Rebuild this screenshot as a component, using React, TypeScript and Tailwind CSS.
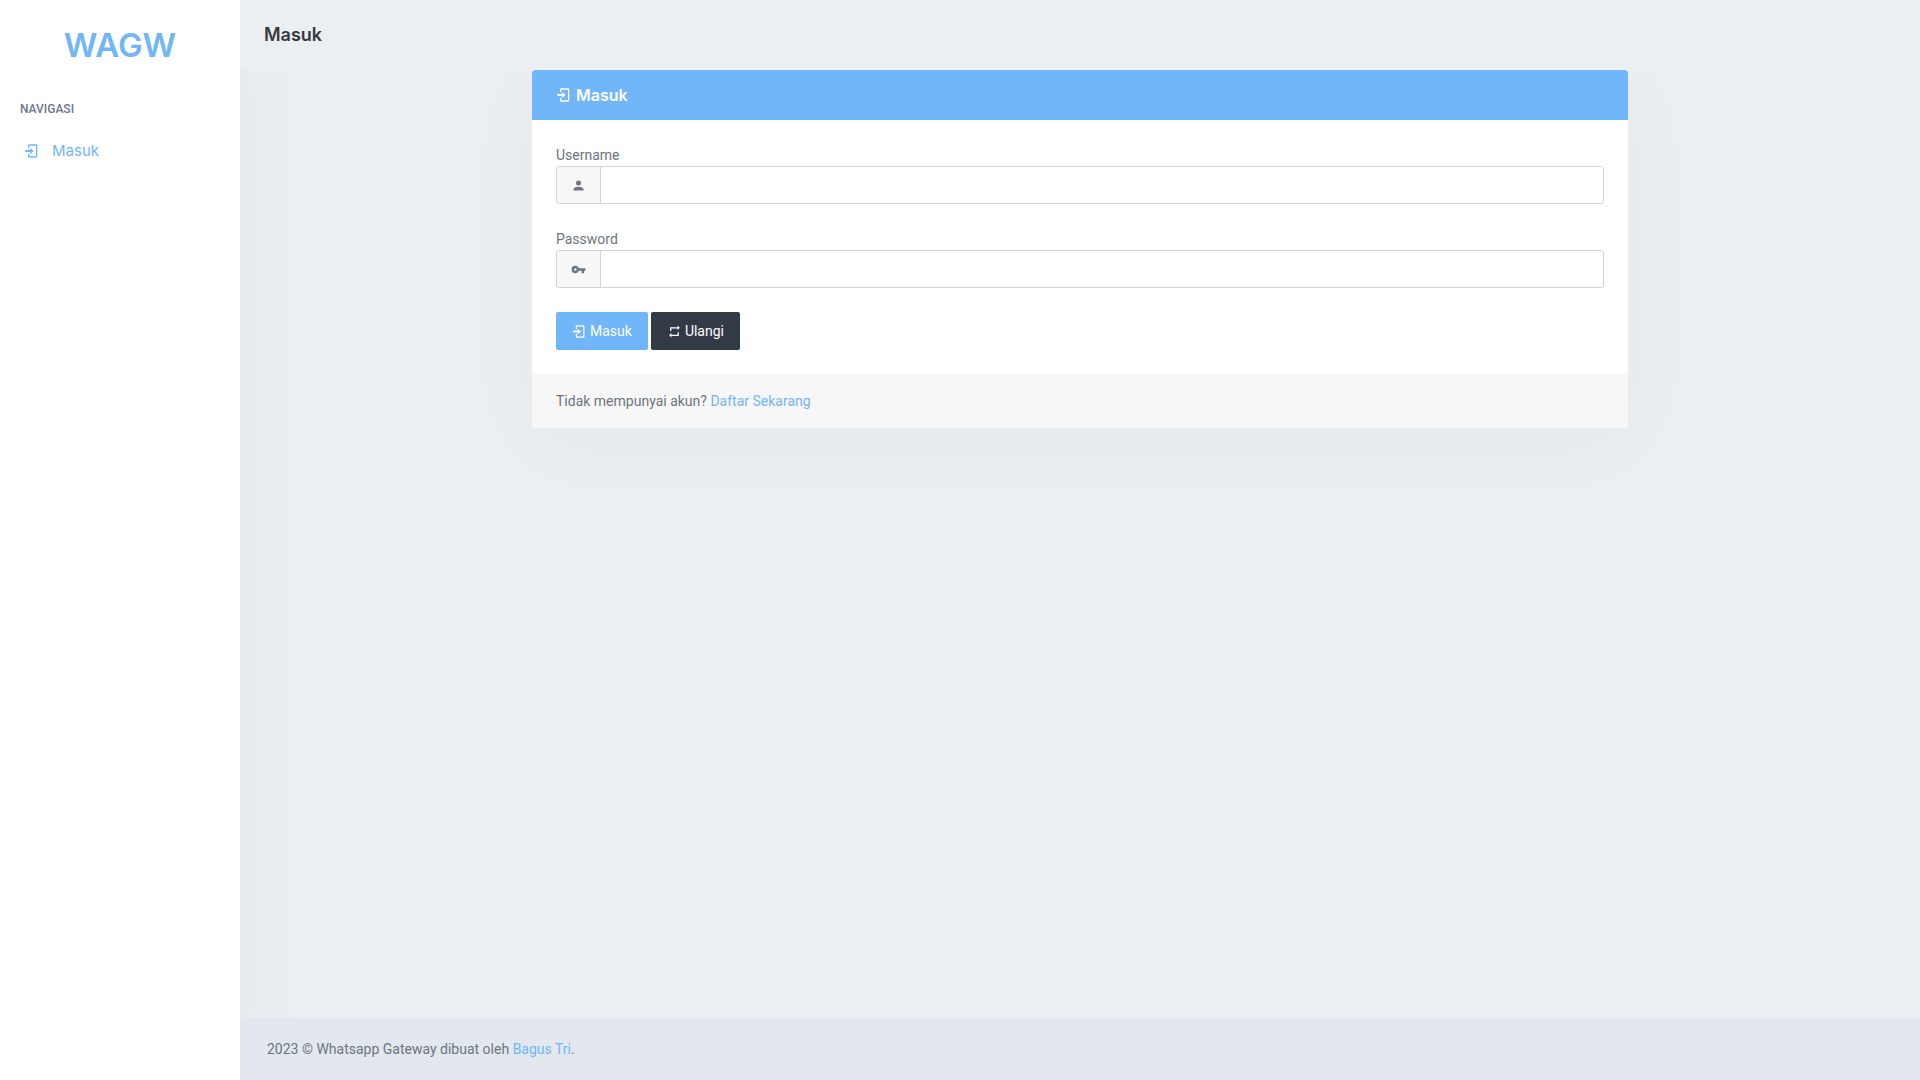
import React from "react";

const icons = {
  login:
    "M9,16.5V13.5H2V10.5H9V7.5L14.5,12L9,16.5M8,2H18A2,2 0 0,1 20,4V20A2,2 0 0,1 18,22H8A2,2 0 0,1 6,20V16H8V20H18V4H8V8H6V4A2,2 0 0,1 8,2Z",
  account:
    "M12,4A4,4 0 0,1 16,8A4,4 0 0,1 12,12A4,4 0 0,1 8,8A4,4 0 0,1 12,4M12,14C16.42,14 20,15.79 20,18V20H4V18C4,15.79 7.58,14 12,14Z",
  key: "M7,14A2,2 0 0,1 5,12A2,2 0 0,1 7,10A2,2 0 0,1 9,12A2,2 0 0,1 7,14M12.65,10C11.83,7.67 9.61,6 7,6A6,6 0 0,0 1,12A6,6 0 0,0 7,18C9.61,18 11.83,16.33 12.65,14H17V18H21V14H23V10H12.65Z",
  repeat:
    "M17,17H7V14.5L3.5,18L7,21.5V19H19V13H17M7,7H17V9.5L20.5,6L17,2.5V5H5V11H7V7Z",
};

function Icon({ name, className }: { name: keyof typeof icons; className: string }) {
  return (
    <svg viewBox="0 0 24 24" fill="currentColor" aria-hidden="true" className={className}>
      <path d={icons[name]} />
    </svg>
  );
}

function Field({ id, label, type, icon }: { id: string; label: string; type: string; icon: keyof typeof icons }) {
  return (
    <div className="mb-6">
      <label htmlFor={id} className="block">
        {label}
      </label>
      <div className="flex h-[38px] overflow-hidden rounded-[3px] border border-[#ced4da]">
        <span className="flex w-11 items-center justify-center border-r border-[#ced4da] bg-[#f7f7f7]">
          <Icon name={icon} className="size-[15px]" />
        </span>
        <input id={id} type={type} className="min-w-0 flex-1 bg-white px-3 outline-none" />
      </div>
    </div>
  );
}

export default function App() {
  return (
    <div className="flex min-h-screen bg-[#ebeff2] font-['Roboto',sans-serif] text-[14px] leading-[22px] text-[#6c757d]">
      <aside className="relative w-60 shrink-0 bg-white shadow-[0_12px_96px_rgba(56,65,74,0.03)]">
        <a href="#" className="mt-[10px] flex h-[70px] items-center justify-center font-['Inter',sans-serif] text-[33px] font-semibold text-[#71b6f9]">
          WAGW
        </a>
        <nav>
          <h2 className="mt-[18px] px-5 text-[12px] font-medium text-[#6e768e]">NAVIGASI</h2>
          <a href="#" className="mt-4 flex h-[30px] items-center gap-3 px-6 font-['Inter',sans-serif] text-[15px] text-[#71b6f9]">
            <Icon name="login" className="size-4" />
            Masuk
          </a>
        </nav>
      </aside>

      <div className="relative flex min-w-0 flex-1 flex-col">
        <header className="relative z-20 flex h-[70px] items-center bg-[#ebeff2] px-6">
          <h1 className="font-['Inter',sans-serif] text-[18px] font-semibold text-[#343a40]">Masuk</h1>
        </header>

        <main className="grid flex-1 grid-cols-12 items-start">
          <section className="relative z-10 col-span-8 col-start-3 mx-3 rounded-t bg-white shadow-[0_12px_96px_rgba(56,65,74,0.03)]">
            <h2 className="flex h-[50px] items-center gap-1 rounded-t bg-[#71b6f9] px-6 font-['Inter',sans-serif] text-[16px] font-semibold text-white">
              <Icon name="login" className="size-4" />
              Masuk
            </h2>
            <form className="p-6" onSubmit={(e) => e.preventDefault()}>
              <Field id="username" label="Username" type="text" icon="account" />
              <Field id="password" label="Password" type="password" icon="key" />
              <div className="flex gap-[3px]">
                <button type="submit" className="flex h-[38px] items-center gap-[3px] rounded-[2px] bg-[#71b6f9] px-4 text-white">
                  <Icon name="login" className="size-[15px]" />
                  Masuk
                </button>
                <button type="reset" className="flex h-[38px] items-center gap-[3px] rounded-[2px] bg-[#323a46] px-4 text-white">
                  <Icon name="repeat" className="size-[15px]" />
                  Ulangi
                </button>
              </div>
            </form>
            <div className="bg-[#f7f7f7] px-6 py-4">
              Tidak mempunyai akun?{" "}
              <a href="#" className="text-[#71b6f9]">
                Daftar Sekarang
              </a>
            </div>
          </section>
        </main>

        <footer className="bg-[#e3e8ee] px-[27px] py-5">
          2023 © Whatsapp Gateway dibuat oleh{" "}
          <a href="#" className="text-[#71b6f9]">
            Bagus Tri
          </a>
          .
        </footer>
      </div>
    </div>
  );
}
